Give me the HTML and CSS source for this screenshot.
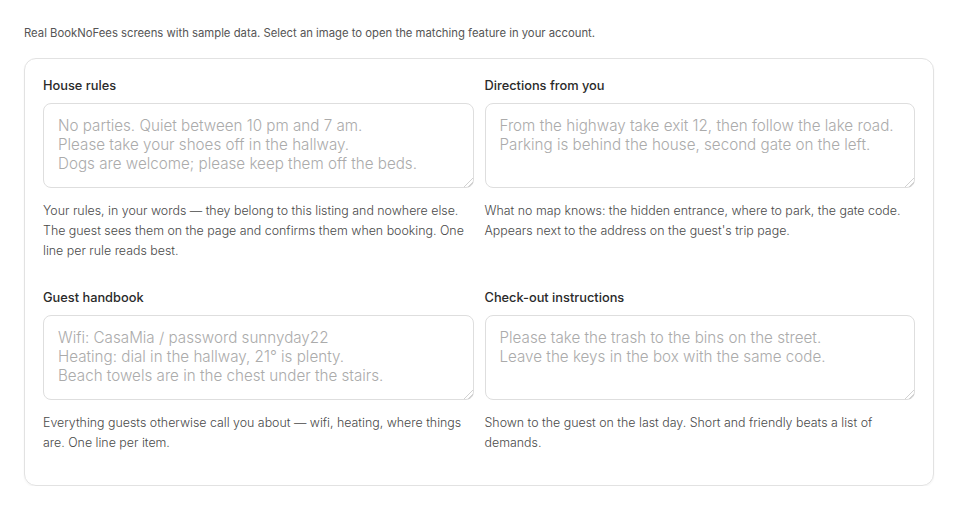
FILE: index.html
```html
<!DOCTYPE html>
<html lang="en">
<head>
<meta charset="utf-8">
<title>Listing texts</title>
<link rel="stylesheet" href="styles.css">
</head>
<body>
<main class="page">
  <p class="intro">Real BookNoFees screens with sample data. Select an image to open the matching feature in your account.</p>
  <section class="card">
    <div class="field">
      <label class="field-label" for="rules">House rules</label>
      <textarea id="rules" class="field-input" rows="4" placeholder="No parties. Quiet between 10 pm and 7 am.
Please take your shoes off in the hallway.
Dogs are welcome; please keep them off the beds."></textarea>
      <p class="field-help">Your rules, in your words — they belong to this listing and nowhere else. The guest sees them on the page and confirms them when booking. One line per rule reads best.</p>
    </div>
    <div class="field">
      <label class="field-label" for="directions">Directions from you</label>
      <textarea id="directions" class="field-input" rows="4" placeholder="From the highway take exit 12, then follow the lake road.
Parking is behind the house, second gate on the left."></textarea>
      <p class="field-help">What no map knows: the hidden entrance, where to park, the gate code. Appears next to the address on the guest's trip page.</p>
    </div>
    <div class="field">
      <label class="field-label" for="handbook">Guest handbook</label>
      <textarea id="handbook" class="field-input" rows="4" placeholder="Wifi: CasaMia / password sunnyday22
Heating: dial in the hallway, 21° is plenty.
Beach towels are in the chest under the stairs."></textarea>
      <p class="field-help">Everything guests otherwise call you about — wifi, heating, where things are. One line per item.</p>
    </div>
    <div class="field">
      <label class="field-label" for="checkout">Check-out instructions</label>
      <textarea id="checkout" class="field-input" rows="4" placeholder="Please take the trash to the bins on the street.
Leave the keys in the box with the same code."></textarea>
      <p class="field-help">Shown to the guest on the last day. Short and friendly beats a list of demands.</p>
    </div>
  </section>
</main>
</body>
</html>
```

FILE: styles.css
```css
* {
  box-sizing: border-box;
}

html, body {
  margin: 0;
  background: #ffffff;
}

body {
  font-family: "Inter", "Noto Sans", sans-serif;
  color: #2b2b2b;
}

.page {
  padding: 26px 26px 0 24px;
}

.intro {
  margin: 0 0 18px;
  font-size: 11.3px;
  line-height: 14px;
  color: #555555;
}

.card {
  width: 910px;
  border: 1px solid #e2e2e2;
  border-radius: 12px;
  box-shadow: 0 1px 2px rgba(0, 0, 0, 0.05);
  padding: 18px 18px 4px;
  display: grid;
  grid-template-columns: 1fr 1fr;
  column-gap: 11px;
  row-gap: 0;
}

.field {
  display: flex;
  flex-direction: column;
  padding-bottom: 28px;
}

.field-label {
  font-size: 12.8px;
  font-weight: 500;
  line-height: 18px;
  color: #2a2a2a;
  margin-bottom: 8px;
}

.field-input {
  display: block;
  width: 100%;
  height: 85px;
  border: 1px solid #dedede;
  border-radius: 8px;
  padding: 12px 14px;
  font-family: inherit;
  font-size: 15.2px;
  font-weight: 300;
  line-height: 19px;
  color: #333333;
  background: #ffffff;
  resize: vertical;
  outline: none;
}

.field-input::placeholder {
  color: #ababab;
}

/* small, faint two-line grip in the corner */
.field-input::-webkit-resizer {
  background: linear-gradient(135deg,
    transparent 68%, #d2d2d2 68%, #d2d2d2 73%,
    transparent 73%, transparent 82%, #d2d2d2 82%, #d2d2d2 87%, transparent 87%);
}

.field-help {
  margin: 13px 0 0;
  font-size: 12.4px;
  font-weight: 300;
  line-height: 20px;
  color: #4a4a4a;
}
```
